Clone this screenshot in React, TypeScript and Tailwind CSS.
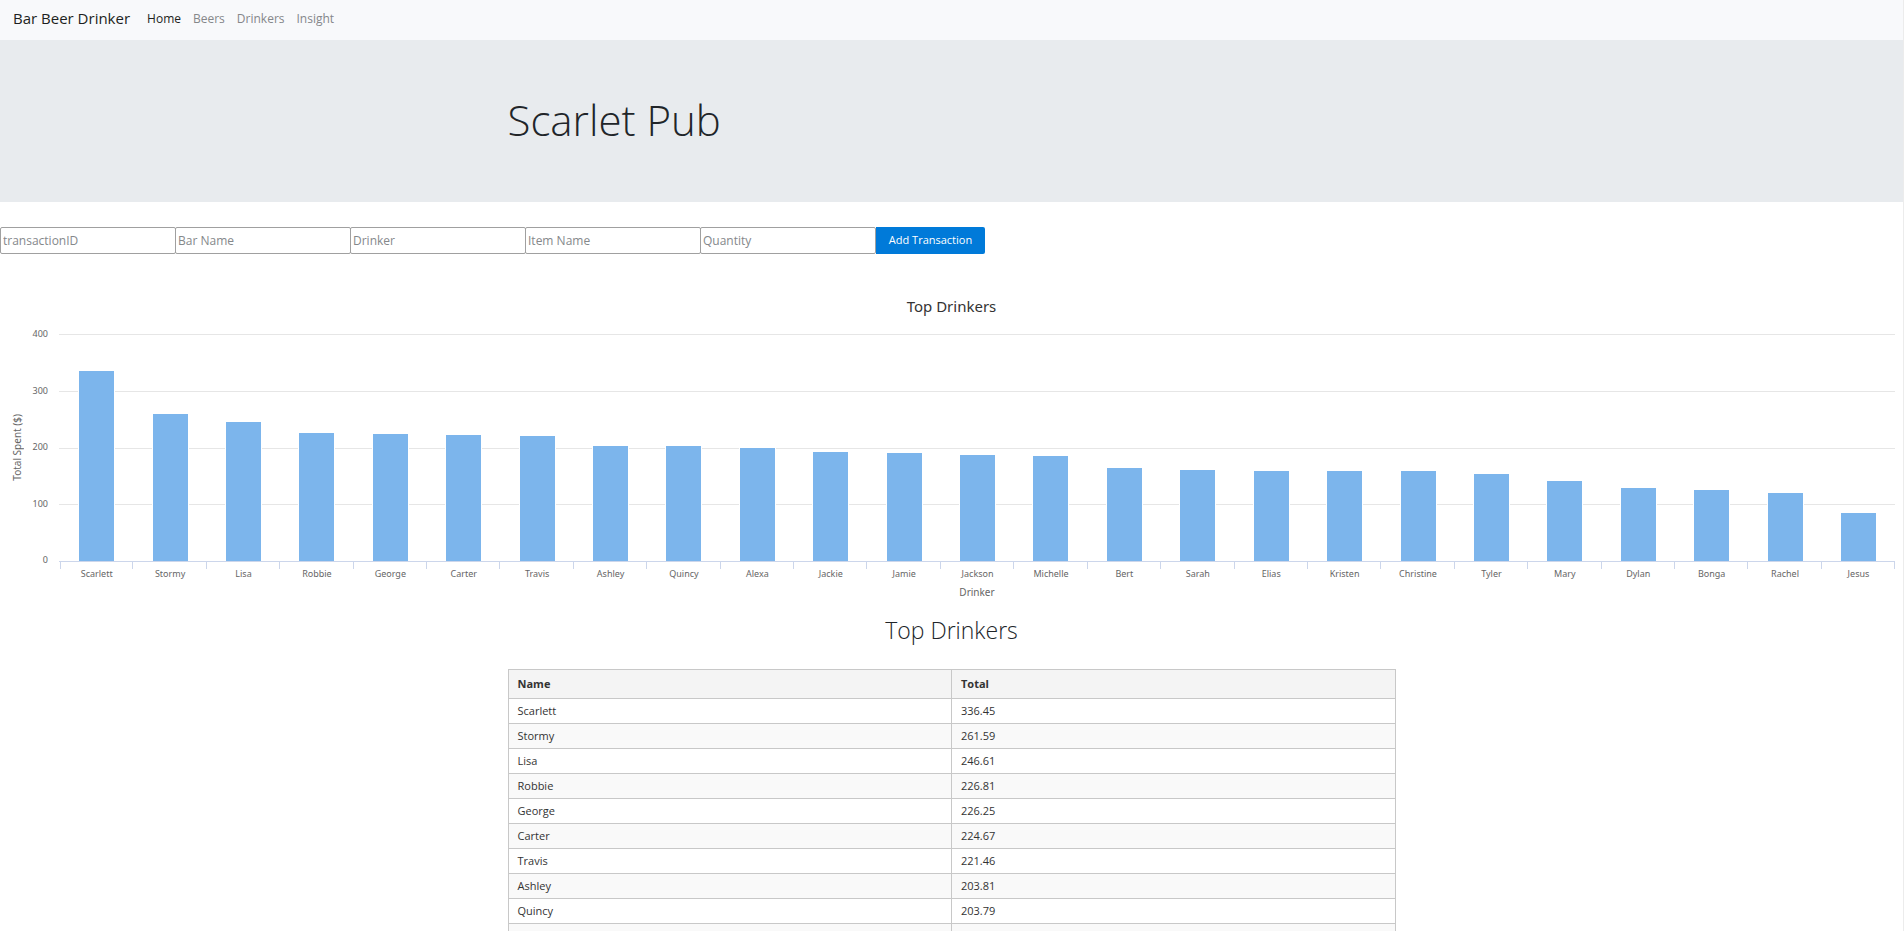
const navLinks = [
  { label: "Home", active: true },
  { label: "Beers", active: false },
  { label: "Drinkers", active: false },
  { label: "Insight", active: false },
];

const fields = ["transactionID", "Bar Name", "Drinker", "Item Name", "Quantity"];

const drinkers = [
  { name: "Scarlett", total: 336.45 },
  { name: "Stormy", total: 261.59 },
  { name: "Lisa", total: 246.61 },
  { name: "Robbie", total: 226.81 },
  { name: "George", total: 226.25 },
  { name: "Carter", total: 224.67 },
  { name: "Travis", total: 221.46 },
  { name: "Ashley", total: 203.81 },
  { name: "Quincy", total: 203.79 },
  { name: "Alexa", total: 201.5 },
  { name: "Jackie", total: 193.2 },
  { name: "Jamie", total: 191.4 },
  { name: "Jackson", total: 189.1 },
  { name: "Michelle", total: 186.3 },
  { name: "Bert", total: 166.2 },
  { name: "Sarah", total: 161.4 },
  { name: "Elias", total: 161.1 },
  { name: "Kristen", total: 159.8 },
  { name: "Christine", total: 159.5 },
  { name: "Tyler", total: 155.2 },
  { name: "Mary", total: 142.4 },
  { name: "Dylan", total: 131.25 },
  { name: "Bonga", total: 126.5 },
  { name: "Rachel", total: 121.3 },
  { name: "Jesus", total: 85.75 },
];

const ticks = [400, 300, 200, 100, 0];
const chartMax = 400;
const tableRows = 10;

function NavBar() {
  return (
    <nav className="flex h-10 items-center bg-[#f8f9fb] px-[13px] pb-[3px]">
      <a href="#" className="mr-[17px] text-[15px] text-[#1d1f21]">
        Bar Beer Drinker
      </a>
      <div className="flex gap-3 text-xs">
        {navLinks.map((link) => (
          <a key={link.label} href="#" className={link.active ? "text-[#1d1f21]" : "text-[#85878a]"}>
            {link.label}
          </a>
        ))}
      </div>
    </nav>
  );
}

function TransactionForm() {
  return (
    <form className="mt-[25px] flex h-[27px]" onSubmit={(e) => e.preventDefault()}>
      {fields.map((field) => (
        <input
          key={field}
          type="text"
          aria-label={field}
          placeholder={field}
          className="-mr-px w-[176px] rounded-xs border border-[#a0a0a0] px-[2px] text-xs placeholder:text-[#85888b]"
        />
      ))}
      <button type="submit" className="ml-px w-[109px] rounded-r-xs bg-[#007ad9] text-[11px] font-medium text-white">
        Add Transaction
      </button>
    </form>
  );
}

function DrinkersChart() {
  return (
    <figure className="mt-[42px] font-['Noto_Sans','Open_Sans',sans-serif] text-[#666666]">
      <figcaption className="text-center text-[15px] leading-5 text-[#333333]">Top Drinkers</figcaption>
      <div className="mt-[10px] flex pr-[8px]">
        <div className="flex h-[243px] w-[35px] items-center justify-center">
          <span className="rotate-180 text-[10px] whitespace-nowrap [writing-mode:vertical-rl]">Total Spent ($)</span>
        </div>
        <div className="-ml-[11px] mr-[11px] flex h-[242px] w-6 flex-col justify-between text-right text-[9px] leading-4">
          {ticks.map((tick) => (
            <span key={tick}>{tick}</span>
          ))}
        </div>
        <div className="flex-1 pt-[8px]">
          <div className="grid h-[228px]">
            <div className="col-start-1 row-start-1 flex flex-col justify-between">
              {ticks.map((tick) => (
                <div key={tick} className={tick === 0 ? "h-px bg-[#ccd6eb]" : "h-px bg-[#e6e6e6]"} />
              ))}
            </div>
            <div className="col-start-1 row-start-1 flex items-stretch pb-px pl-px">
              {drinkers.map((d) => (
                <div key={d.name} className="flex flex-1 items-end justify-center">
                  <div
                    className="w-[37px] border border-b-0 border-white bg-[#7cb5ec]"
                    style={{ height: `${(d.total / chartMax) * 100}%` }}
                  />
                </div>
              ))}
            </div>
          </div>
          <div className="flex border-l border-transparent">
            {drinkers.map((d) => (
              <div key={d.name} className="group flex-1">
                <div className="h-[7px] border-r border-[#ccd6eb] group-first:border-l" />
                <div className="-mt-px text-center text-[9px] leading-3">{d.name}</div>
              </div>
            ))}
          </div>
          <div className="mt-[6px] text-center text-[10px] leading-3">Drinker</div>
        </div>
      </div>
    </figure>
  );
}

function DrinkersTable() {
  return (
    <table className="mx-auto mt-6 w-full max-w-[888px] table-fixed border-collapse font-['Open_Sans','Noto_Sans',sans-serif] text-[11px] leading-4 text-[#333333]">
      <thead>
        <tr className="h-[29px] bg-[#f4f4f4] text-left">
          <th className="border border-[#c8c8c8] px-[9px] font-bold">Name</th>
          <th className="border border-[#c8c8c8] px-[9px] font-bold">Total</th>
        </tr>
      </thead>
      <tbody>
        {drinkers.slice(0, tableRows).map((d) => (
          <tr key={d.name} className="h-[25px] even:bg-[#f9f9f9]">
            <td className="border border-[#c8c8c8] px-[9px]">{d.name}</td>
            <td className="border border-[#c8c8c8] px-[9px]">{d.total.toFixed(2)}</td>
          </tr>
        ))}
      </tbody>
    </table>
  );
}

export default function App() {
  return (
    <div className="h-screen overflow-y-auto border-r border-[#ececec] bg-white font-['Open_Sans','Noto_Sans',sans-serif] text-[#212529] [scrollbar-width:none]">
      <NavBar />
      <header className="bg-[#e8ebee] pt-[50px] pb-[52px]">
        <div className="mx-auto max-w-[888px]">
          <h1 className="text-[42px] leading-[60px] font-light">Scarlet Pub</h1>
        </div>
      </header>
      <TransactionForm />
      <DrinkersChart />
      <h2 className="mt-4 text-center text-[23px] leading-8 font-light">Top Drinkers</h2>
      <div className="-mt-px">
        <DrinkersTable />
      </div>
    </div>
  );
}
